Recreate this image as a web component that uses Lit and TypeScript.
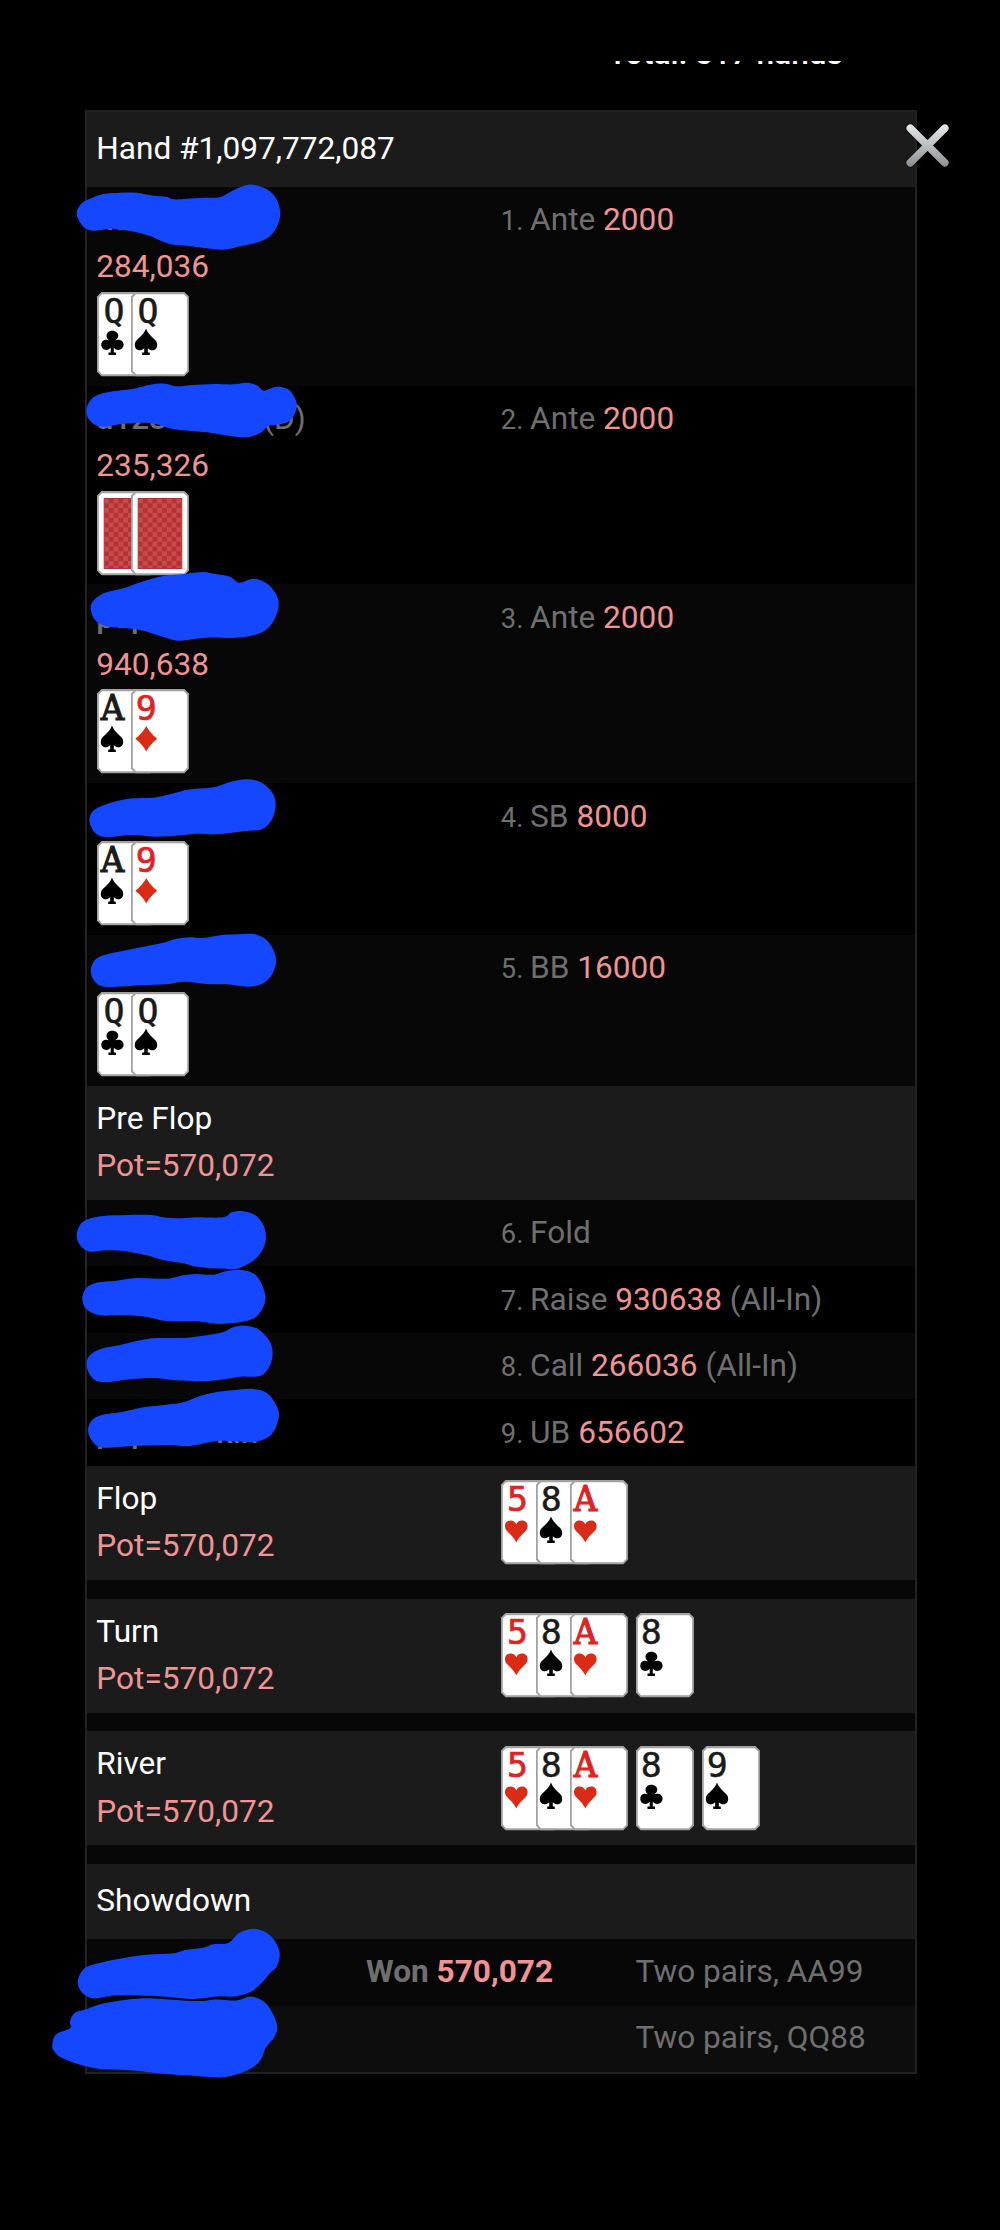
import { LitElement, html, css, svg, nothing } from "lit";
import { customElement, property } from "lit/decorators.js";

type Suit = "c" | "s" | "h" | "d";

const SUITS: Record<Suit, string> = {
  s: "M15 36.500 C16 40 19 43 22 46 C25 48.500 26.200 50 26.200 53 C26.200 57.500 22.500 59 19.500 58 C18.500 57.700 17.500 57 16.800 56.300 L16.800 60.500 L18.800 60.500 L18.800 63 L11.200 63 L11.200 60.500 L13.200 60.500 L13.200 56.300 C12.500 57 11.500 57.700 10.500 58 C7.500 59 3.800 57.500 3.800 53 C3.800 50 5 48.500 8 46 C11 43 14 40 15 36.500 Z",
  c: "M15.300 38.800 C18.700 38.800 21.300 41 21.300 43.800 C21.300 45.600 20 47 18.300 48.200 C19 47.900 20 47.700 21 47.700 C24.200 47.700 26.600 49.700 26.600 52.600 C26.600 55.800 24.200 58 21.200 58 C19.200 58 17.800 57 16.800 55.600 L16.800 60.500 L19 60.500 L19 63 L11.500 63 L11.500 60.500 L13.700 60.500 L13.700 55.600 C12.700 57 11.300 58 9.300 58 C6.300 58 4.300 55.800 4.300 52.600 C4.300 49.700 6.400 47.700 9.500 47.700 C10.500 47.700 11.300 47.900 12 48.200 C10.300 47 9.500 45.600 9.500 43.800 C9.500 41 11.900 38.800 15.300 38.800 Z",
  h: "M15.300 62.500 C14.500 60.500 12 57 8.500 53.500 C5.500 50.500 4 49.500 4 46 C4 42.500 6.500 40.500 9.700 40.500 C12.300 40.500 14.300 41.800 15.300 44.300 C16.300 41.800 18.300 40.500 20.900 40.500 C24.100 40.500 26.600 42.500 26.600 46 C26.600 49.500 25.100 50.500 22.100 53.500 C18.600 57 16.100 60.500 15.300 62.500 Z",
  d: "M15.300 37 C17 41 22.500 47 26.300 49.800 C22.500 52.600 17 58.600 15.300 62.600 C13.600 58.600 8.100 52.600 4.300 49.800 C8.100 47 13.600 41 15.300 37 Z",
};

@customElement("playing-card")
class PlayingCard extends LitElement {
  @property() card = "";

  static styles = css`
    :host { display: block; width: 57.900px; height: 84.300px; flex: none; }
    svg { display: block; overflow: visible; }
    .rank { font: 34.500px "DejaVu Sans Mono", monospace; }
    .serif { font: 34.500px "DejaVu Serif", serif; }
    .black { fill: #1a1a1a; stroke: #1a1a1a; stroke-width: 0.500px; }
    .red { fill: #e02222; stroke: #e02222; stroke-width: 0.700px; }
    .serif.black, .serif.red { stroke-width: 1.200px; }
    .suit-black { fill: #000; }
    .suit-red { fill: #d92b15; }
  `;

  render() {
    const rank = this.card[0];
    const suit = this.card[1] as Suit;
    const red = suit === "h" || suit === "d";
    return html`<svg width="57.9" height="84.3" viewBox="0 0 57.9 84.3">
      <path d="M4.500 0H53.400L57.900 4.500V79.800L53.400 84.300H4.500L0 79.800V4.500Z" fill="#a2a2a2" />
      <path d="M5 2.200H52.900L56.200 5.500V78.800L52.900 82.300H5L1.800 78.800V5.500Z" fill="#fff" />
      ${this.card === "back"
        ? svg`<defs><pattern id="weave" x="7" y="7.500" width="9.600" height="9.600" patternUnits="userSpaceOnUse">
              <rect width="9.600" height="9.600" fill="#b43233" />
              <rect width="4.800" height="4.800" fill="#c84b4b" />
              <rect x="4.800" y="4.800" width="4.800" height="4.800" fill="#c84b4b" />
            </pattern></defs>
            <rect x="7.200" y="7.500" width="43.600" height="70" fill="url(#weave)" stroke="#b43233" stroke-width="1" />`
        : svg`<text x=${rank === "A" ? 15.6 : rank === "5" ? 16.5 : rank === "Q" ? 17 : 15.3} y="31.2" text-anchor="middle"
              class="${rank === "A" ? "serif" : "rank"} ${red ? "red" : "black"}"
              textLength=${rank === "A" ? 23.5 : 21} lengthAdjust="spacingAndGlyphs">${rank}</text>
            <path d=${SUITS[suit]} class=${red ? "suit-red" : "suit-black"} />`}
    </svg>`;
  }
}

@customElement("card-group")
class CardGroup extends LitElement {
  @property({ attribute: false }) cards: string[] = [];

  static styles = css`
    :host { display: flex; padding-left: 0.500px; }
    playing-card + playing-card { margin-left: -23.500px; }
  `;

  render() {
    return this.cards.map((c) => html`<playing-card .card=${c}></playing-card>`);
  }
}

interface Row {
  kind: "seat" | "seat-short" | "action";
  n: number;
  verb: string;
  amount?: string;
  note?: string;
  name?: string;
  tail?: string;
  dealer?: boolean;
  stack?: string;
  cards?: string[];
}

const SEATS: Row[] = [
  { kind: "seat", n: 1, verb: "Ante", amount: "2000", name: "m", stack: "284,036", cards: ["Qc", "Qs"] },
  { kind: "seat", n: 2, verb: "Ante", amount: "2000", name: "a123", dealer: true, stack: "235,326", cards: ["back", "back"] },
  { kind: "seat", n: 3, verb: "Ante", amount: "2000", name: "pap", stack: "940,638", cards: ["As", "9d"] },
  { kind: "seat-short", n: 4, verb: "SB", amount: "8000", cards: ["As", "9d"] },
  { kind: "seat-short", n: 5, verb: "BB", amount: "16000", cards: ["Qc", "Qs"] },
];

const ACTIONS: Row[] = [
  { kind: "action", n: 6, verb: "Fold" },
  { kind: "action", n: 7, verb: "Raise", amount: "930638", note: "(All-In)" },
  { kind: "action", n: 8, verb: "Call", amount: "266036", note: "(All-In)" },
  { kind: "action", n: 9, verb: "UB", amount: "656602", name: "pap", tail: "kin" },
];

const STREETS = [
  { name: "Flop", groups: [["5h", "8s", "Ah"]] },
  { name: "Turn", groups: [["5h", "8s", "Ah"], ["8c"]] },
  { name: "River", groups: [["5h", "8s", "Ah"], ["8c"], ["9s"]] },
];

interface Mark { oy: number; sy: number; pts: number[] }

// Marker strokes that cover player names: outline points in thirds of a pixel.
const MARKS: Mark[] = [
  { oy: 30, sy: 3, pts: [110,552,125,520,150,506,190,492,240,488,290,488,340,497,378,500,402,508,440,506,490,503,538,502,575,484,610,468,640,464,680,478,708,505,721,550,710,592,688,620,655,636,605,648,550,659,500,655,440,647,400,644,370,635,330,618,290,607,250,600,210,596,160,602,130,590] },
  { oy: 370, sy: 3, pts: [139,120,150,92,175,74,220,64,280,56,330,44,375,41,410,49,460,45,520,42,580,43,620,38,650,46,670,62,695,54,720,50,750,62,770,98,765,130,745,155,710,165,685,168,660,190,620,202,570,198,510,188,430,181,385,174,350,163,310,158,240,163,200,170,165,164,145,145] },
  { oy: 370, sy: 3, pts: [152,715,162,690,195,668,250,655,310,634,370,618,430,612,490,606,530,613,570,620,598,638,640,626,680,640,708,672,716,705,705,745,680,778,640,796,580,804,500,803,420,812,380,804,330,788,290,778,240,773,195,768,165,750] },
  { oy: 770, sy: 3, pts: [148,152,160,122,195,104,235,92,280,85,340,83,390,73,450,58,520,52,570,36,620,28,665,38,698,70,707,108,695,150,665,178,620,183,530,193,470,191,420,196,350,200,270,195,200,202,165,188] },
  { oy: 770, sy: 3, pts: [152,602,165,570,195,554,250,542,310,530,370,518,410,506,450,502,490,504,540,496,590,493,645,493,685,515,708,565,698,610,670,640,625,650,560,643,500,642,435,635,380,643,300,646,200,651,165,635] },
  { oy: 1180, sy: 3, pts: [110,168,120,135,145,117,190,108,260,105,335,105,370,112,420,115,470,112,550,112,575,97,605,93,645,105,670,135,678,170,670,205,645,238,605,262,575,267,480,262,430,250,370,240,320,226,250,213,200,211,150,215,122,198] },
  { oy: 1180, sy: 3, pts: [127,357,138,325,170,308,230,302,290,294,380,296,430,286,470,282,520,284,560,273,605,270,650,288,676,345,665,390,630,420,540,432,470,424,380,423,320,411,250,405,180,406,140,388] },
  { oy: 1180, sy: 3, pts: [140,555,150,525,185,506,240,495,300,481,350,474,430,474,500,466,550,456,580,442,615,437,655,448,688,482,698,520,688,560,660,588,600,590,550,598,490,604,400,600,340,594,270,598,190,607,155,592] },
  { oy: 1180, sy: 3, pts: [144,752,155,722,185,705,250,695,310,682,380,674,430,667,480,648,530,636,580,631,640,627,685,643,715,690,712,730,690,768,645,786,590,784,530,783,450,798,380,795,280,798,190,803,158,785] },
  { oy: 1560, sy: 2.904, pts: [113,1225,125,1195,150,1178,210,1163,260,1154,330,1146,400,1142,440,1132,490,1126,520,1116,565,1112,600,1082,645,1071,690,1090,718,1135,712,1178,690,1200,665,1228,630,1255,580,1268,540,1267,460,1275,370,1268,265,1264,220,1265,160,1273,125,1255] },
  { oy: 1560, sy: 2.904, pts: [37,1410,48,1378,90,1360,90,1340,105,1315,140,1304,190,1288,260,1277,340,1273,465,1281,530,1276,590,1279,635,1268,680,1290,710,1345,705,1382,678,1415,660,1455,620,1483,550,1502,460,1498,370,1492,270,1482,180,1478,120,1466,70,1448,45,1430] },
];

// Closed Catmull-Rom curve through the outline points.
function outline({ oy, sy, pts }: Mark): string {
  const p: [number, number][] = [];
  for (let i = 0; i < pts.length; i += 2) p.push([40 + pts[i] / 3, oy + pts[i + 1] / sy]);
  const n = p.length;
  let d = `M${p[0][0].toFixed(1)} ${p[0][1].toFixed(1)}`;
  for (let i = 0; i < n; i++) {
    const a = p[(i + n - 1) % n], b = p[i], c = p[(i + 1) % n], e = p[(i + 2) % n];
    const v = [b[0] + (c[0] - a[0]) / 6, b[1] + (c[1] - a[1]) / 6, c[0] - (e[0] - b[0]) / 6, c[1] - (e[1] - b[1]) / 6, c[0], c[1]];
    d += "C" + v.map((x) => x.toFixed(1)).join(" ");
  }
  return d + "Z";
}

@customElement("app-root")
class AppRoot extends LitElement {
  static styles = css`
    :host {
      display: block; position: relative; box-sizing: border-box; width: 1000px; height: 2230px;
      overflow: hidden; background: #000; padding-top: 61px;
      font: 31.600px/47.300px Roboto, sans-serif; color: #6f6f6f; white-space: nowrap;
    }
    .total { height: 49px; overflow: hidden; padding-left: 608px; color: #fff; font-weight: 500; line-height: 40px; font-size: 31.600px; }
    .total-text { display: block; margin-top: -27px; }
    .panel { width: 832px; height: 1963.500px; box-sizing: border-box; margin-left: 85px; border: 2px solid #222; border-top-color: #1f1f1f; background: #070707; }
    .head { box-sizing: border-box; background: #1b1b1b; color: #fff; padding-left: 9.300px; }
    .title { height: 74.700px; padding-top: 12.800px; }
    .showdown { height: 75px; padding-top: 13.200px; }
    .row { display: grid; grid-template-columns: 404.500px 1fr; box-sizing: border-box; padding: 9.200px 0 0 9.300px; background: #070707; }
    .row.dark { background: #000; }
    .seat { height: 198.900px; }
    .seat-short { height: 151.300px; }
    .action { height: 66.500px; }
    .who { display: block; height: 47.300px; font-weight: 500; }
    .name { display: inline-block; width: 120px; height: 47.300px; vertical-align: top; }
    .short { width: 167px; }
    .dealer { font-weight: 400; }
    .pink { color: #f09394; }
    .stack { height: 47.300px; }
    .seat card-group, .seat-short card-group { margin-top: 1.200px; }
    .n { font-size: 27.300px; line-height: 0; }
    .street { display: grid; grid-template-columns: 404.500px 1fr; height: 114px; box-sizing: border-box; padding-top: 9.100px; }
    .board { display: flex; gap: 7.500px; padding-top: 5.400px; }
    .gap { height: 18.700px; }
    .result { display: grid; grid-template-columns: 270px 269.500px 1fr; height: 66.700px; box-sizing: border-box; padding: 8.700px 0 0 9px; }
    .result.alt { background: #0d0d0d; }
    .bold { font-weight: 700; }
    .close { position: absolute; left: 901px; top: 119px; }
    .marks { position: absolute; left: 0; top: 0; fill: #1547ff; }
  `;

  private row(r: Row, i: number) {
    return html`<div class="row ${r.kind} ${i % 2 ? "dark" : ""}">
      <div><span class="who">${r.name
        ? html`<span class="name ${r.dealer ? "short" : ""}">${r.name}</span>`
        : nothing}${r.tail ?? nothing}${r.dealer ? html`<span class="dealer">(D)</span>` : nothing}</span>${r.stack
        ? html`<div class="stack pink">${r.stack}</div>`
        : nothing}${r.cards ? html`<card-group .cards=${r.cards}></card-group>` : nothing}</div>
      <div class="act"><span class="n">${r.n}. </span>${r.verb}${r.amount
        ? html` <span class="pink">${r.amount}</span>`
        : nothing}${r.note ? " " + r.note : nothing}</div>
    </div>`;
  }

  render() {
    return html`
      <div class="total"><span class="total-text">Total: 517 hands</span></div>
      <div class="panel">
        <div class="head title">Hand #1,097,772,087</div>
        ${SEATS.map((r, i) => this.row(r, i))}
        <div class="head street"><div><div>Pre Flop</div><div class="pink">Pot=570,072</div></div></div>
        ${ACTIONS.map((r, i) => this.row(r, i))}
        ${STREETS.map((s) => html`<div class="head street">
            <div><div>${s.name}</div><div class="pink">Pot=570,072</div></div>
            <div class="board">${s.groups.map((g) => html`<card-group .cards=${g}></card-group>`)}</div>
          </div>
          <div class="gap"></div>`)}
        <div class="head showdown">Showdown</div>
        <div class="result"><span></span><span class="bold">Won <span class="pink">570,072</span></span><span>Two pairs, AA99</span></div>
        <div class="result alt"><span></span><span></span><span>Two pairs, QQ88</span></div>
      </div>
      <svg class="close" width="54" height="54" viewBox="0 0 54 54">
        <defs><linearGradient id="steel" gradientUnits="userSpaceOnUse" x1="0" y1="5" x2="0" y2="49">
          <stop offset="0" stop-color="#e6eaeb" /><stop offset="0.500" stop-color="#b9bec0" /><stop offset="1" stop-color="#878c8e" />
        </linearGradient></defs>
        <g fill="none" stroke-linecap="round">
          <path d="M9.500 9.500L44 44M44 9.500L9.500 44" stroke="#000" stroke-opacity="0.350" stroke-width="9.500" />
          <path d="M9.300 9.300L43.800 43.800M43.800 9.300L9.300 43.800" stroke="url(#steel)" stroke-width="7.600" />
        </g>
      </svg>
      <svg class="marks" width="1000" height="2230" viewBox="0 0 1000 2230">
        ${MARKS.map((m) => svg`<path d=${outline(m)} />`)}
      </svg>
    `;
  }
}
